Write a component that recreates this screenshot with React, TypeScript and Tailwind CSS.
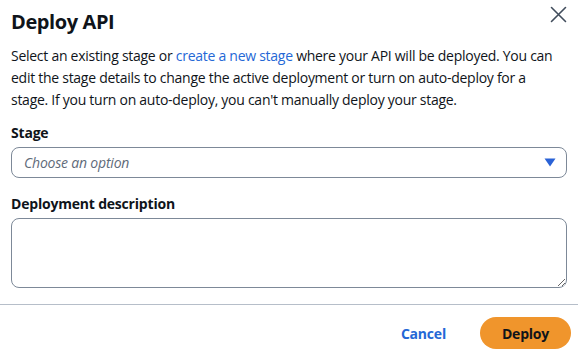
export default function App() {
  return (
    <div className="flex h-[354px] w-[578px] flex-col bg-white font-['Open_Sans',sans-serif] text-[#0f141a]">
      {/* Header */}
      <div className="flex items-start justify-between pl-[11px] pr-[11px] pt-[9px]">
        <h1 className="text-[20px] font-bold leading-[26px] tracking-[-0.4px]">Deploy API</h1>
        <button aria-label="Close" className="-mt-[3px] text-[#414d5c]">
          <svg width="17" height="17" viewBox="0 0 17 17" fill="none" stroke="currentColor" strokeWidth="1.6" strokeLinecap="round">
            <path d="M1.5 1.5 L15.5 15.5 M15.5 1.5 L1.5 15.5" />
          </svg>
        </button>
      </div>

      {/* Body */}
      <div className="flex flex-col px-[11px] pt-[10px]">
        <p className="max-w-[553px] text-[14px] leading-[22px] tracking-[-0.27px]">
          Select an existing stage or{" "}
          <a href="#" className="text-[#2467d6]">
            create a new stage
          </a>{" "}
          where your API will be deployed. You can edit the stage details to change the active deployment or turn on auto-deploy for a
          stage. If you turn on auto-deploy, you can't manually deploy your stage.
        </p>

        <label className="mt-[11px] text-[14px] font-bold leading-[22px] tracking-[-0.2px]">Stage</label>
        <div className="mt-[3px] flex h-[31px] items-center justify-between rounded-[8px] border border-[#7d8998] pl-[12px] pr-[10px]">
          <span className="text-[14px] italic tracking-[-0.2px] text-[#5f6b7a]">Choose an option</span>
          <svg width="12" height="9" viewBox="0 0 12 9">
            <path d="M0.5 0.5 H11.5 L6 8.5 Z" fill="#2a62d6" />
          </svg>
        </div>

        <label className="mt-[15px] text-[14px] font-bold leading-[22px] tracking-[-0.2px]">Deployment description</label>
        <textarea className="mt-[3px] h-[70px] resize-y rounded-[8px] border border-[#7d8998] px-[11px] py-[4px] text-[14px] outline-none" />
      </div>

      {/* Footer */}
      <div className="mt-[16px] border-t border-[#b6bec9]" />
      <div className="flex items-center justify-end gap-[34px] px-[7px] pt-[12px]">
        <button className="text-[14px] font-bold tracking-[-0.2px] text-[#2467d6]">Cancel</button>
        <button className="h-[32px] w-[91px] rounded-full bg-[#f0952c] text-[14px] font-bold tracking-[-0.2px] text-[#0f141a]">
          Deploy
        </button>
      </div>
    </div>
  );
}
